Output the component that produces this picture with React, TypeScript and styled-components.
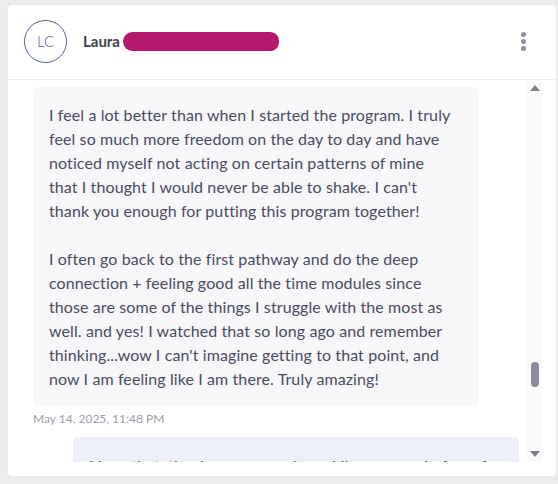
import styled, { createGlobalStyle } from "styled-components";

const GlobalStyle = createGlobalStyle`
    html, body {
        margin: 0;
        padding: 0;
        background: #ececef;
        font-family: "Lato", "Noto Sans", sans-serif;
    }
    * {
        box-sizing: border-box;
    }
`

// line breaks kept as they appear in the conversation
const messages = [
    {
        id: 1,
        mine: false,
        time: "May 14, 2025, 11:48 PM",
        paragraphs: [
            "I feel a lot better than when I started the program. I truly\nfeel so much more freedom on the day to day and have\nnoticed myself not acting on certain patterns of mine\nthat I thought I would never be able to shake. I can't\nthank you enough for putting this program together!",
            "I often go back to the first pathway and do the deep\nconnection + feeling good all the time modules since\nthose are some of the things I struggle with the most as\nwell. and yes! I watched that so long ago and remember\nthinking...wow I can't imagine getting to that point, and\nnow I am feeling like I am there. Truly amazing!",
        ],
    },
    {
        id: 2,
        mine: true,
        time: "",
        paragraphs: [
            "I love that, thank you so much, and I'm so proud of you for sticking with it.",
        ],
    },
]

export default function App() {
    return (
        <>
            <GlobalStyle/>
            <Page>
                <Card>
                    <Header>
                        <Avatar>LC</Avatar>
                        <Name>
                            Laura <Redacted/>
                        </Name>
                        <Kebab aria-label="more">
                            <Dot/>
                            <Dot/>
                            <Dot/>
                        </Kebab>
                    </Header>

                    <Body>
                        <MessageList>
                            {messages.map(m => (
                                <Message key={m.id} $mine={m.mine}>
                                    <Bubble $mine={m.mine}>
                                        {m.paragraphs.map((p, i) => (
                                            <Paragraph key={i}>{p}</Paragraph>
                                        ))}
                                    </Bubble>
                                    {m.time && <Time>{m.time}</Time>}
                                </Message>
                            ))}
                        </MessageList>

                        <Scrollbar>
                            <Arrow $up/>
                            <Track>
                                <Thumb style={{marginTop: 266}}/>
                            </Track>
                            <Arrow/>
                        </Scrollbar>
                    </Body>
                </Card>
            </Page>
        </>
    );
}

const Page = styled.div`
    padding: 5px 2px 8px 8px;
    height: 484px;
`

const Card = styled.div`
    background: #ffffff;
    border-radius: 4px;
    height: 471px;
    display: flex;
    flex-direction: column;
    padding-bottom: 14px;
    box-shadow: 0 0 2px rgba(0, 0, 0, 0.04);
`

const Header = styled.div`
    display: flex;
    align-items: center;
    height: 75px;
    padding: 0 30px 2px 16px;
    border-bottom: 1px solid #ececef;
    flex-shrink: 0;
`

const Avatar = styled.div`
    width: 43px;
    height: 43px;
    border-radius: 50%;
    border: 1px solid #4f5d97;
    color: #4f5d97;
    display: flex;
    align-items: center;
    justify-content: center;
    font-size: 15px;
    font-weight: 300;
    flex-shrink: 0;
`

const Name = styled.div`
    margin-left: 16px;
    flex: 1;
    display: flex;
    align-items: center;
    gap: 3px;
    font-size: 15px;
    font-weight: 700;
    color: #3e3f55;
`

const Redacted = styled.span`
    display: inline-block;
    width: 156px;
    height: 19px;
    border-radius: 10px 9px 9px 10px;
    background: #b5176a;
`

const Kebab = styled.div`
    display: flex;
    flex-direction: column;
    gap: 2px;
`

const Dot = styled.span`
    width: 5px;
    height: 5px;
    border-radius: 50%;
    background: #8c90a2;
`

const Body = styled.div`
    flex: 1;
    display: flex;
    min-height: 0;
`

const MessageList = styled.div`
    flex: 1;
    overflow: hidden;
    padding: 7px 8px 0 25px;
    display: flex;
    flex-direction: column;
    gap: 10px;
`

const Message = styled.div<{ $mine: boolean }>`
    display: flex;
    flex-direction: column;
    align-items: ${p => (p.$mine ? "flex-end" : "flex-start")};
`

const Bubble = styled.div<{ $mine: boolean }>`
    width: 446px;
    padding: ${p => (p.$mine ? "17px" : "16px")} 8px 15px 16px;
    border-radius: 5px;
    background: ${p => (p.$mine ? "#eceef9" : "#f7f7fa")};
    color: #4b4c5e;
    font-size: 16px;
    line-height: 24px;
    letter-spacing: 0.1px;
`

const Paragraph = styled.p`
    margin: 0 0 24px;
    white-space: pre-line;

    &:last-child {
        margin-bottom: 0;
    }
`

const Time = styled.div`
    margin-top: 5px;
    font-size: 12px;
    line-height: 16px;
    color: #9b9ca8;
`

const Scrollbar = styled.div`
    width: 15px;
    margin-right: 14px;
    background: #fafafb;
    display: flex;
    flex-direction: column;
    align-items: center;
`

const Arrow = styled.span<{ $up?: boolean }>`
    width: 0;
    height: 0;
    margin: 5px 0;
    border-left: 5px solid transparent;
    border-right: 5px solid transparent;
    ${p => (p.$up
        ? "border-bottom: 6px solid #7d7f8c;"
        : "border-top: 6px solid #7d7f8c;")}
`

const Track = styled.div`
    flex: 1;
    width: 100%;
    display: flex;
    justify-content: center;
`

const Thumb = styled.div`
    width: 8px;
    height: 25px;
    border-radius: 4px;
    background: #8b8c9b;
`
